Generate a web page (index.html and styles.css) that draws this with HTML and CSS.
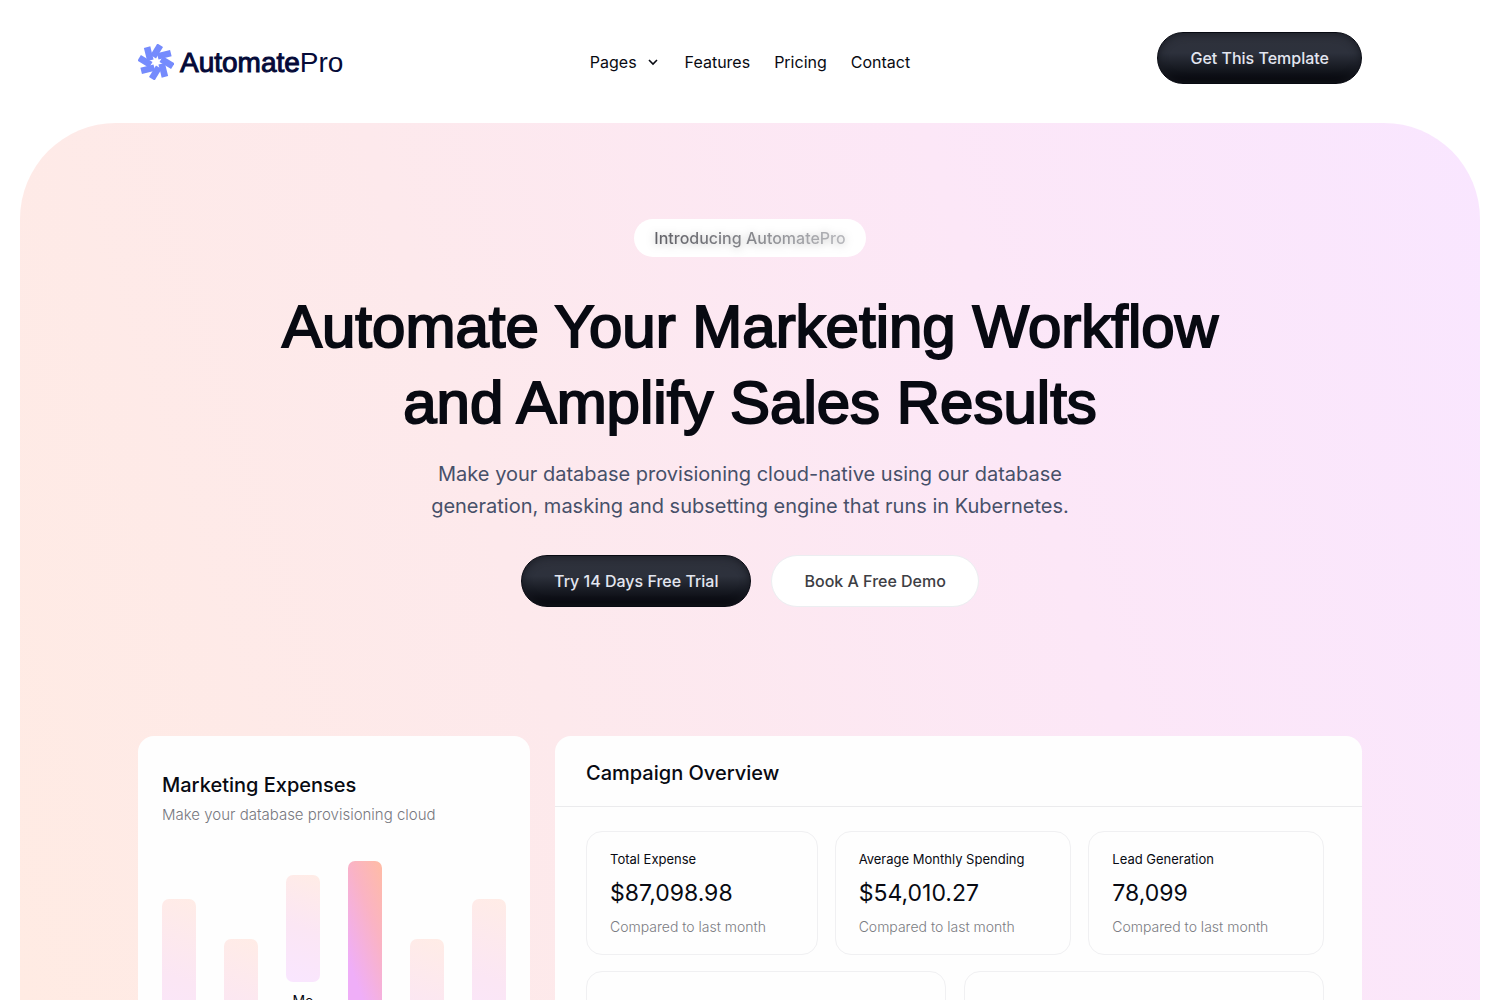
FILE: index.html
```
<!DOCTYPE html>
<html lang="en">
<head>
  <meta charset="utf-8">
  <meta name="viewport" content="width=device-width, initial-scale=1">
  <title>AutomatePro</title>
  <link rel="stylesheet" href="styles.css">
</head>
<body>
  <header class="header">
    <a class="logo" href="#" aria-label="AutomatePro home">
      <svg class="logo-mark" viewBox="-18 -18 36 36" aria-hidden="true">
        <defs><path id="petal" d="M-2.8 -5.2L4.2 -16.8"/></defs>
        <g stroke="#758bfd" stroke-width="6.6">
          <use href="#petal"/>
          <use href="#petal" transform="rotate(45)"/>
          <use href="#petal" transform="rotate(90)"/>
          <use href="#petal" transform="rotate(135)"/>
          <use href="#petal" transform="rotate(180)"/>
          <use href="#petal" transform="rotate(225)"/>
          <use href="#petal" transform="rotate(270)"/>
          <use href="#petal" transform="rotate(315)"/>
        </g>
      </svg>
      <span class="logo-text"><span class="logo-strong">Automate</span>Pro</span>
    </a>
    <nav class="nav">
      <a class="nav-link" href="#">Pages
        <svg class="chevron" viewBox="0 0 16 16" aria-hidden="true"><path d="M4 6l4 4 4-4" fill="none" stroke="currentColor" stroke-width="1.6"/></svg>
      </a>
      <a class="nav-link" href="#">Features</a>
      <a class="nav-link" href="#">Pricing</a>
      <a class="nav-link" href="#">Contact</a>
    </nav>
    <div class="header-action"><button class="button button-dark" type="button">Get This Template</button></div>
  </header>

  <main class="hero">
    <div class="intro">
      <p class="badge"><span class="badge-text">Introducing AutomatePro</span></p>
      <h1 class="title">Automate Your Marketing Workflow<br>and Amplify Sales Results</h1>
      <p class="lead">Make your database provisioning cloud-native using our database<br>generation, masking and subsetting engine that runs in Kubernetes.</p>
      <div class="actions">
        <button class="button button-dark" type="button">Try 14 Days Free Trial</button>
        <button class="button button-light" type="button">Book A Free Demo</button>
      </div>
    </div>

    <div class="dashboard">
      <section class="card expenses">
        <h2 class="card-title">Marketing Expenses</h2>
        <p class="card-note">Make your database provisioning cloud</p>
        <div class="chart">
          <div class="column level-3"><div class="bar"></div></div>
          <div class="column level-4"><div class="bar"></div></div>
          <div class="column level-2"><div class="bar bar-short"></div><span class="bar-label">Mo</span></div>
          <div class="column level-1"><div class="bar bar-active"></div></div>
          <div class="column level-4"><div class="bar"></div></div>
          <div class="column level-3"><div class="bar"></div></div>
        </div>
      </section>
      <section class="card overview">
        <h2 class="card-title overview-title">Campaign Overview</h2>
        <div class="overview-body">
          <div class="stats">
            <div class="stat"><h3 class="stat-name">Total Expense</h3><p class="stat-value">$87,098.98</p><p class="stat-note">Compared to last month</p></div>
            <div class="stat"><h3 class="stat-name">Average Monthly Spending</h3><p class="stat-value">$54,010.27</p><p class="stat-note">Compared to last month</p></div>
            <div class="stat"><h3 class="stat-name">Lead Generation</h3><p class="stat-value">78,099</p><p class="stat-note">Compared to last month</p></div>
          </div>
          <div class="panels"><div class="panel"></div><div class="panel"></div></div>
        </div>
      </section>
    </div>
  </main>
</body>
</html>
```
FILE: styles.css
```
* { box-sizing: border-box; }

body {
  margin: 0;
  height: 100vh;
  display: flex;
  flex-direction: column;
  overflow: hidden;
  background: #fff;
  color: #080a12;
  font-family: Inter, "Liberation Sans", sans-serif;
  font-size: 16px;
  line-height: 24px;
}

h1, h2, h3, p { margin: 0; }
a { color: inherit; text-decoration: none; }

.header {
  width: 100%;
  max-width: 1272px;
  margin: 0 auto;
  padding: 32px 24px 31px;
  display: grid;
  grid-template-columns: 1fr auto 1fr;
}

.logo { display: flex; align-items: center; gap: 6px; height: 60px; color: #050a38; }
.logo-mark { width: 36px; height: 36px; }
.logo-text { padding-top: 2px; font-family: "Liberation Sans", Arial, sans-serif; font-size: 28px; line-height: 32px; }
.logo-strong { -webkit-text-stroke: 1px currentColor; }

.nav { display: flex; align-items: center; gap: 24px; height: 60px; }
.nav-link { display: flex; align-items: center; gap: 8px; }
.chevron { width: 16px; height: 16px; }
.header-action { text-align: right; }

.button {
  height: 52px;
  padding: 0 32px;
  border: 1px solid #080a12;
  border-radius: 26px;
  font: 500 16px/24px Inter, "Liberation Sans", sans-serif;
}
.button-dark {
  color: #e3e6f0;
  background: linear-gradient(#2e313b, #2d313c 40%, #171a22 70%, #07080e 94%);
  box-shadow: inset 0 0 8px #171921;
}
.button-light { border-color: #eceef1; background: #fff; color: #3d3e44; }

.hero {
  flex: 1;
  min-height: 0;
  margin: 0 20px;
  padding: 96px 24px 0;
  overflow: hidden;
  border-radius: 96px 96px 0 0;
  background: linear-gradient(72deg, #ffebe3, #fde9ec 36%, #fce7f7 68%, #f9e6ff);
}

.intro { display: flex; flex-direction: column; align-items: center; text-align: center; }
.badge { padding: 7px 20px; border-radius: 20px; background: #fff; font-weight: 500; }
.badge-text {
  color: transparent;
  background: linear-gradient(90deg, #606066, #85868b 50%, #b7b8bc);
  -webkit-background-clip: text;
  background-clip: text;
  filter: drop-shadow(0 1px 4px rgba(0, 0, 0, .25));
}
.title {
  margin-top: 32px;
  font-family: "Liberation Sans", Arial, sans-serif;
  font-size: 60px;
  font-weight: 400;
  line-height: 76px;
  white-space: nowrap;
  -webkit-text-stroke: 2px currentColor;
}
.lead { margin-top: 17px; font-size: 20px; line-height: 32px; color: #475069; }
.actions { display: flex; gap: 20px; margin-top: 33px; }

.dashboard {
  max-width: 1224px;
  margin: 129px auto 0;
  display: grid;
  grid-template-columns: 392fr 807fr;
  gap: 25px;
}
.card { min-width: 0; height: 500px; border-radius: 16px; background: #fefefe; }
.card-title { font-size: 20px; line-height: 28px; font-weight: 500; }

.expenses { padding: 35px 24px; }
.card-note { margin-top: 4px; color: #77787f; font-size: 15px; font-weight: 300; }
.chart { display: flex; justify-content: space-between; margin-top: 34px; }
.column { width: 34px; text-align: center; }
.level-2 { padding-top: 14px; }
.level-3 { padding-top: 38px; }
.level-4 { padding-top: 78px; }
.bar { height: 160px; border-radius: 7px; background: linear-gradient(200deg, #ffece6, #fbe6f4 50%, #f9e6ff); }
.bar-short { height: 107px; }
.bar-active { background: linear-gradient(250deg, #ffbca5, #fab3c4 34%, #efaef8 76%); }
.bar-label { display: block; margin-top: 9px; font-size: 14px; line-height: 20px; }

.overview-title { padding: 23px 31px 19px; border-bottom: 1px solid #ebebed; }
.overview-body { display: grid; gap: 16px; padding: 24px 38px 0 31px; }
.stats { display: grid; grid-template-columns: 232fr 237fr 236fr; gap: 17px; }
.stat { padding: 15px 0 14px 23px; border: 1px solid #f0f0f2; border-radius: 16px; white-space: nowrap; height: 124px; }
.stat-name { font-size: 13px; line-height: 24px; font-weight: 400; }
.stat-value { margin-top: 6px; font-size: 23px; line-height: 32px; }
.stat-note { margin-top: 8px; font-size: 14px; line-height: 20px; font-weight: 300; color: #7b7c82; }
.panels { display: grid; grid-template-columns: 1fr 1fr; gap: 18px; }
.panel { height: 240px; border: 1px solid #f0f0f2; border-radius: 16px; }
```
